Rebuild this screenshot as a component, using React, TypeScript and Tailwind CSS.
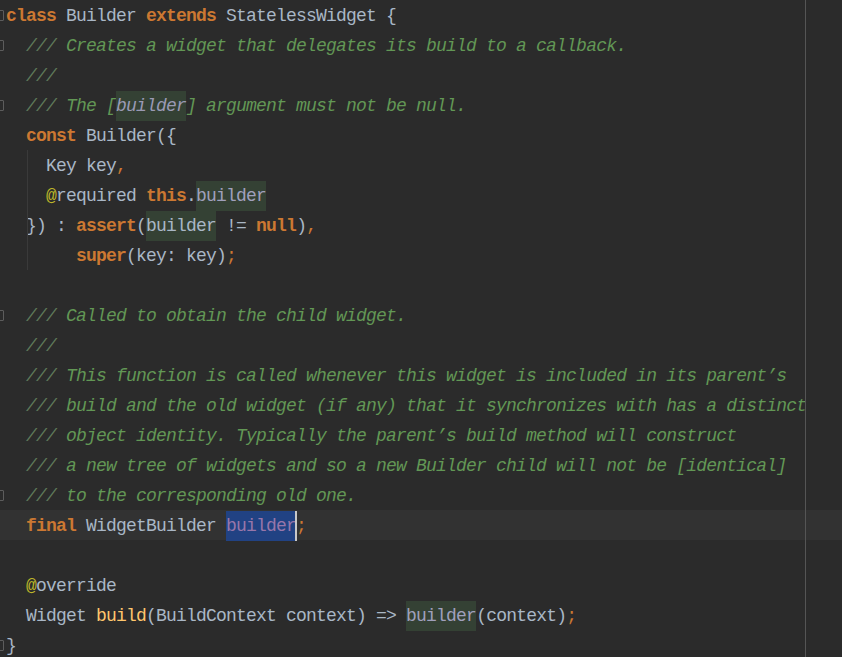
import React from "react";

const K = ({ children }: { children: React.ReactNode }) => (
  <span className="text-[#cc7832] font-bold">{children}</span>
);
const P = ({ children }: { children: React.ReactNode }) => (
  <span className="text-[#cc7832]">{children}</span>
);
const C = ({ children }: { children: React.ReactNode }) => (
  <span className="text-[#629755] italic">{children}</span>
);
const CS = () => <span className="text-[#5f7a5a] italic">///</span>;
const HL = ({ children, cls }: { children: React.ReactNode; cls?: string }) => (
  <span className={"bg-[#344134] inline-block h-[30px] leading-[30px] " + (cls ?? "text-[#a9b7c6]")}>{children}</span>
);
const At = () => <span className="text-[#bbb529]">@</span>;

const Fold = () => (
  <div className="w-[5px] h-[11px] border border-[#5c5c5c] rounded-[1px] -ml-[1px]" />
);

function Row({
  fold,
  children,
  current,
  guide,
}: {
  fold?: boolean;
  children?: React.ReactNode;
  current?: boolean;
  guide?: boolean;
}) {
  return (
    <div className={"relative flex items-center h-[30px] " + (current ? "bg-[#323232]" : "")}>
      <div className="w-[6px] flex items-center">{fold ? <Fold /> : null}</div>
      <span className="whitespace-pre text-[#a9b7c6] pt-[2px]">{children}</span>
      {guide ? <div className="absolute left-[27px] top-0 h-[30px] w-px bg-[#3a3a3a]" /> : null}
    </div>
  );
}

export default function App() {
  return (
    <div
      className="relative w-[842px] h-[657px] overflow-hidden bg-[#2b2b2b] text-[18px] tracking-[-0.8px] leading-[28px]"
      style={{ fontFamily: '"Liberation Mono", "DejaVu Sans Mono", monospace' }}
    >
      <div className="flex flex-col">
        <Row fold>
          <K>class</K> Builder <K>extends</K> StatelessWidget {"{"}
        </Row>
        <Row fold>
          {"  "}<CS /><C> Creates a widget that delegates its build to a callback.</C>
        </Row>
        <Row>
          {"  "}<CS />
        </Row>
        <Row fold>
          {"  "}<CS /><C> The [</C><HL cls="text-[#9a9ab4] italic">builder</HL><C>] argument must not be null.</C>
        </Row>
        <Row>
          {"  "}<K>const</K> Builder{"({"}
        </Row>
        <Row guide>
          {"    "}Key key<P>,</P>
        </Row>
        <Row guide>
          {"    "}<At />required <K>this</K>.<HL cls="text-[#a0a0bc]">builder</HL>
        </Row>
        <Row guide>
          {"  "}{"})"} : <K>assert</K>(<HL>builder</HL> != <K>null</K>)<P>,</P>
        </Row>
        <Row guide>
          {"       "}<K>super</K>(key: key)<P>;</P>
        </Row>
        <Row />
        <Row fold>
          {"  "}<CS /><C> Called to obtain the child widget.</C>
        </Row>
        <Row>
          {"  "}<CS />
        </Row>
        <Row>
          {"  "}<CS /><C> This function is called whenever this widget is included in its parent’s</C>
        </Row>
        <Row>
          {"  "}<CS /><C> build and the old widget (if any) that it synchronizes with has a distinct</C>
        </Row>
        <Row>
          {"  "}<CS /><C> object identity. Typically the parent’s build method will construct</C>
        </Row>
        <Row>
          {"  "}<CS /><C> a new tree of widgets and so a new Builder child will not be [identical]</C>
        </Row>
        <Row fold>
          {"  "}<CS /><C> to the corresponding old one.</C>
        </Row>
        <Row current>
          {"  "}<K>final</K> WidgetBuilder{" "}
          <span className="relative inline-block h-[30px] leading-[30px] bg-[#214283] text-[#9876aa]">
            builder
            <span className="absolute -right-[1px] top-0 h-[30px] w-[2px] bg-[#c8c8c8]" />
          </span>
          <P>;</P>
        </Row>
        <Row />
        <Row>
          {"  "}<At />override
        </Row>
        <Row>
          {"  "}Widget <span className="text-[#ffc66d]">build</span>(BuildContext context) =&gt;{" "}
          <HL cls="text-[#a0a0bc]">builder</HL>(context)<P>;</P>
        </Row>
        <Row fold>{"}"}</Row>
      </div>
      <div className="absolute left-[805px] top-0 h-full w-px bg-[#555555]" />
    </div>
  );
}
